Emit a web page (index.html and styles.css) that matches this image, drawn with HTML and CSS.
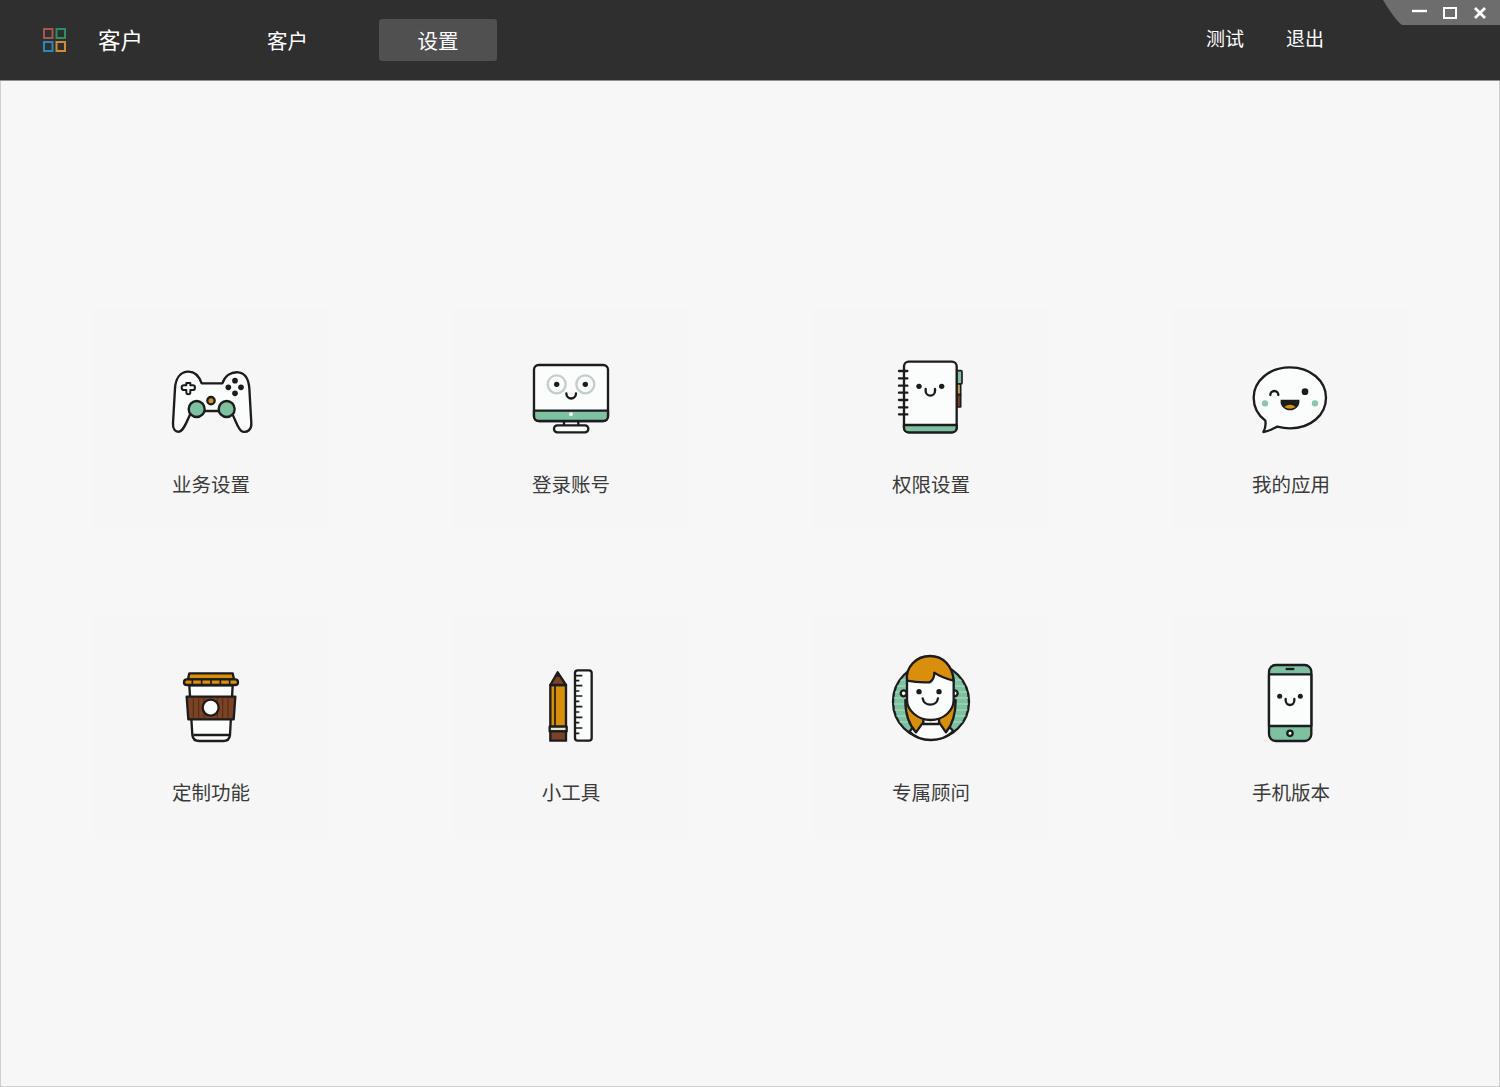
FILE: index.html
```html
<!DOCTYPE html>
<html lang="zh-CN">
<head>
<meta charset="utf-8">
<title>客户</title>
<link rel="stylesheet" href="styles.css">
</head>
<body>
<div class="window">
  <header class="topbar">
    <div class="brand">
      <svg class="logo" viewBox="0 0 23 24" width="23" height="24">
        <rect x="1" y="1" width="8.5" height="9" fill="none" stroke="#a9544f" stroke-width="2"/>
        <rect x="13.5" y="1" width="8.5" height="9" fill="none" stroke="#2b8f60" stroke-width="2"/>
        <rect x="1" y="14" width="8.5" height="9" fill="none" stroke="#2a88b8" stroke-width="2"/>
        <rect x="13.5" y="14" width="8.5" height="9" fill="none" stroke="#cf8c36" stroke-width="2"/>
      </svg>
      <span class="brand-name">客户</span>
    </div>
    <nav class="nav">
      <a class="nav-item">客户</a>
      <a class="nav-item nav-active">设置</a>
    </nav>
    <div class="actions">
      <a class="action">测试</a>
      <a class="action">退出</a>
    </div>
    <div class="winctl">
      <svg width="117" height="25" viewBox="0 0 117 25">
        <path d="M0 0 L117 0 L117 25 L19 25 Q12 20 0 0Z" fill="#6d6d6d"/>
        <path d="M29 11 H44" stroke="#fff" stroke-width="2.4"/>
        <rect x="61" y="8" width="12" height="10" fill="none" stroke="#fff" stroke-width="2"/>
        <path d="M92 8 L102 18 M102 8 L92 18" stroke="#fff" stroke-width="2.8"/>
      </svg>
    </div>
  </header>

  <main class="grid">
    <div class="card">
      <svg class="icon" viewBox="0 -30 306 300">
        <g stroke="#1c1c1c" stroke-width="7" stroke-linejoin="round" stroke-linecap="round">
          <path fill="#fbfcfc" d="M125 85 L187 85 C195 62 213 50 235 52 C256 54 266 75 268 100 L274 205 C275 224 262 233 248 230 C234 227 228 195 212 168 L95 168 C82 195 72 227 58 230 C46 232 38 222 39 205 L45 100 C47 72 60 52 82 50 C105 48 118 65 125 85Z"/>
          <path fill="#fbfcfc" stroke-width="6" d="M79 84 h12 v7 h7 a7 7 0 0 1 0 14 h-7 v7 a6 6 0 0 1 -12 0 v-7 h-7 a7 7 0 0 1 0 -14 h7 v-7z"/>
          <circle cx="110" cy="162" r="24" fill="#7dc1a1"/>
          <circle cx="200" cy="162" r="24" fill="#7dc1a1"/>
          <circle cx="153" cy="137" r="11" fill="#d4912a"/>
        </g>
        <g fill="#1c1c1c">
          <circle cx="225" cy="77" r="8.5"/><circle cx="205" cy="97" r="8.5"/><circle cx="243" cy="97" r="8.5"/><circle cx="225" cy="115" r="8.5"/>
        </g>
      </svg>
      <span class="label">业务设置</span>
    </div>

    <div class="card">
      <svg class="icon" viewBox="0 -30 306 300">
        <g stroke="#1c1c1c" stroke-width="7" stroke-linejoin="round">
          <path d="M132 198 V212 M175 198 V212" fill="none"/>
          <rect x="102" y="211" width="103" height="21" rx="10" fill="#fbfcfc"/>
          <rect x="42" y="30" width="222" height="168" rx="14" fill="#fbfcfc"/>
          <path d="M42 167 H264 V184 a14 14 0 0 1 -14 14 H56 a14 14 0 0 1 -14 -14Z" fill="#7dc1a1"/>
        </g>
        <circle cx="153" cy="178" r="6" fill="#fbfcfc"/>
        <circle cx="110" cy="88" r="27" fill="#fbfcfc" stroke="#c3cfca" stroke-width="7"/>
        <circle cx="196" cy="88" r="27" fill="#fbfcfc" stroke="#c3cfca" stroke-width="7"/>
        <circle cx="110" cy="88" r="8" fill="#1c1c1c"/>
        <circle cx="196" cy="88" r="8" fill="#1c1c1c"/>
        <path d="M139 115 a14 15 0 0 0 29 0" fill="none" stroke="#1c1c1c" stroke-width="7" stroke-linecap="round"/>
      </svg>
      <span class="label">登录账号</span>
    </div>

    <div class="card">
      <svg class="icon" viewBox="0 -30 306 300">
        <g stroke="#1c1c1c" stroke-width="5" stroke-linejoin="round">
          <rect x="230" y="47" width="16" height="40" rx="3" fill="#7dc1a1"/>
          <rect x="230" y="87" width="12" height="32" fill="#c9a565"/>
          <rect x="230" y="119" width="12" height="37" fill="#7a4325"/>
        </g>
        <g stroke="#1c1c1c" stroke-width="7" stroke-linejoin="round">
          <rect x="72" y="20" width="158" height="212" rx="14" fill="#fbfcfc"/>
          <path d="M72 210 H230 V218 a14 14 0 0 1 -14 14 H86 a14 14 0 0 1 -14 -14Z" fill="#7dc1a1"/>
        </g>
        <path d="M57 48 H82 M57 70 H82 M57 92 H82 M57 113 H82 M57 135 H82 M57 157 H82 M57 178 H82" stroke="#1c1c1c" stroke-width="7" stroke-linecap="round"/>
        <circle cx="117" cy="94" r="8" fill="#1c1c1c"/>
        <circle cx="185" cy="94" r="8" fill="#1c1c1c"/>
        <path d="M137 102 V108 a14 14 0 0 0 28 0 V102" fill="none" stroke="#1c1c1c" stroke-width="7" stroke-linecap="round"/>
      </svg>
      <span class="label">权限设置</span>
    </div>

    <div class="card">
      <svg class="icon" viewBox="0 -30 306 300">
        <path d="M150 37 C212 37 258 78 258 128 C258 180 212 220 150 220 C137 220 124 218 112 215 C98 222 84 230 70 231 C76 221 78 210 76 197 C54 180 41 156 41 128 C41 78 88 37 150 37Z" fill="#fbfcfc" stroke="#1c1c1c" stroke-width="7" stroke-linejoin="round"/>
        <path d="M91 120 a12 12 0 0 1 24 0" fill="none" stroke="#1c1c1c" stroke-width="7" stroke-linecap="round"/>
        <circle cx="195" cy="110" r="10" fill="#1c1c1c"/>
        <circle cx="75" cy="145" r="9.5" fill="#8cc7ab"/>
        <circle cx="225" cy="145" r="9.5" fill="#8cc7ab"/>
        <path d="M122 134 H178 C181 152 167 166 150 166 C133 166 119 152 122 134Z" fill="#1c1c1c"/>
        <path d="M133 156 Q150 142 167 156 Q150 166 133 156Z" fill="#d98e0c"/>
      </svg>
      <span class="label">我的应用</span>
    </div>

    <div class="card">
      <svg class="icon" viewBox="0 -21 306 300">
        <g stroke="#1c1c1c" stroke-width="7" stroke-linejoin="round">
          <path d="M88 76 L97 225 Q99 243 118 243 L190 243 Q208 243 210 225 L218 76Z" fill="#fbfcfc"/>
          <path d="M100 225 H207" fill="none"/>
          <path d="M88 40 H218 L222 58 H84Z" fill="#d98e0c"/>
          <rect x="72" y="58" width="162" height="17" rx="8.5" fill="#d98e0c"/>
          <path d="M97 59 V74 M125 59 V74 M153 59 V74 M181 59 V74 M209 59 V74" stroke-width="5" fill="none"/>
          <path d="M80 110 H226 L221 178 H85Z" fill="#7a4325"/>
        </g>
        <path d="M100 112 V176 M116 112 V176 M132 112 V176 M172 112 V176 M188 112 V176 M204 112 V176" stroke="#54290f" stroke-width="3"/>
        <circle cx="152" cy="143" r="24" fill="#fbfcfc" stroke="#1c1c1c" stroke-width="7"/>
      </svg>
      <span class="label">定制功能</span>
    </div>

    <div class="card">
      <svg class="icon" viewBox="0 -21 306 300">
        <g stroke="#1c1c1c" stroke-width="7" stroke-linejoin="round">
          <rect x="165" y="31" width="50" height="211" rx="8" fill="#fbfcfc"/>
          <path d="M165 47 H187 M165 62 H178 M165 77 H187 M165 93 H178 M165 108 H187 M165 124 H178 M165 140 H187 M165 156 H178 M165 172 H187 M165 188 H178 M165 204 H187 M165 220 H178" stroke-width="5" fill="none"/>
          <path d="M91 75 H138 V200 H91Z" fill="#d98e0c"/>
          <path d="M91 75 L113 37 L138 75Z" fill="#7a4325"/>
          <path d="M105 75 V197" stroke-width="5" fill="none"/>
          <rect x="89" y="200" width="51" height="14" fill="#e9e2d6"/>
          <rect x="91" y="214" width="47" height="28" fill="#7a4325"/>
        </g>
        <path d="M105 50 L113 37 L121 50Z" fill="#1c1c1c"/>
      </svg>
      <span class="label">小工具</span>
    </div>

    <div class="card">
      <svg class="icon" viewBox="0 9 306 300">
        <defs>
          <clipPath id="round"><circle cx="153" cy="155" r="112"/></clipPath>
        </defs>
        <circle cx="153" cy="155" r="114" fill="#7dc1a1" stroke="#1c1c1c" stroke-width="7"/>
        <g clip-path="url(#round)" stroke="#9fd2b8" stroke-width="4">
          <path d="M30 90 H280 M30 108 H280 M30 126 H280 M30 144 H280 M30 162 H280 M30 180 H280 M30 198 H280 M30 216 H280"/>
        </g>
        <g stroke="#1c1c1c" stroke-width="7" stroke-linejoin="round">
          <path d="M122 205 L88 245 C105 262 130 270 153 270 C178 270 203 260 220 243 L183 205Z" fill="#fbfcfc"/>
          <path d="M76 150 C76 200 90 228 108 247 L136 208 L100 170Z" fill="#d98e0c"/>
          <path d="M227 150 C227 200 214 228 198 247 L171 208 L205 170Z" fill="#d98e0c"/>
          <path d="M130 205 V222 H177 V205" fill="#fbfcfc"/>
          <circle cx="71" cy="130" r="9" fill="#fbfcfc"/>
          <circle cx="224" cy="130" r="9" fill="#fbfcfc"/>
          <path d="M81 92 V150 C81 180 112 210 152 210 C193 210 221 180 221 150 V92 C218 60 190 40 150 40 C110 40 84 60 81 92Z" fill="#fbfcfc"/>
          <path d="M81 92 C76 50 110 18 150 18 C190 18 218 48 221 92 C205 88 180 80 163 68 C163 80 158 92 148 97 C125 98 100 96 81 92Z" fill="#d98e0c"/>
        </g>
        <circle cx="117" cy="125" r="8" fill="#1c1c1c"/>
        <circle cx="177" cy="125" r="8" fill="#1c1c1c"/>
        <path d="M128 145 C132 170 170 170 174 145" fill="none" stroke="#1c1c1c" stroke-width="7" stroke-linecap="round"/>
      </svg>
      <span class="label">专属顾问</span>
    </div>

    <div class="card">
      <svg class="icon" viewBox="0 -6 306 300">
        <g stroke="#1c1c1c" stroke-width="7" stroke-linejoin="round">
          <rect x="87" y="30" width="127" height="228" rx="20" fill="#7dc1a1"/>
          <rect x="87" y="58" width="127" height="155" fill="#fbfcfc"/>
          <path d="M137 42 H163" fill="none"/>
          <circle cx="150" cy="235" r="8" fill="#fbfcfc"/>
        </g>
        <circle cx="119" cy="124" r="7.5" fill="#1c1c1c"/>
        <circle cx="181" cy="124" r="7.5" fill="#1c1c1c"/>
        <path d="M137 132 V136 a13 14 0 0 0 26 0 V132" fill="none" stroke="#1c1c1c" stroke-width="7" stroke-linecap="round"/>
      </svg>
      <span class="label">手机版本</span>
    </div>
  </main>
</div>
</body>
</html>
```

FILE: styles.css
```css
* { box-sizing: border-box; }
html, body { margin: 0; padding: 0; }
body {
  width: 1500px;
  height: 1087px;
  overflow: hidden;
  font-family: "Noto Sans CJK SC", "Liberation Sans", sans-serif;
  background: #f7f7f7;
}
.window {
  position: relative;
  width: 1500px;
  height: 1087px;
  display: flex;
  flex-direction: column;
  border: 1px solid #cfcfcf;
  border-top: 0;
}
.topbar {
  height: 81px;
  margin: 0 -1px;
  flex: none;
  display: flex;
  align-items: center;
  background: #2f2f2f;
  border-bottom: 1px solid #8f8f8f;
  padding-left: 43px;
  color: #fff;
  font-weight: 400;
}
.brand {
  display: flex;
  align-items: center;
  width: 224px;
}
.logo { flex: none; margin-top: -1px; margin-right: 32px; }
.brand-name { font-size: 22.5px; line-height: 28px; margin-top: -2px; }
.nav {
  display: flex;
  align-items: center;
}
.nav-item {
  font-size: 20.5px;
  line-height: 30px;
  width: 40px;
  white-space: nowrap;
}
.nav-active {
  width: 118px;
  height: 42px;
  margin-left: 72px;
  line-height: 42px;
  text-align: center;
  background: #505050;
  border-radius: 3px;
}
.actions {
  display: flex;
  gap: 42px;
  margin-left: 709px;
  margin-top: -5px;
}
.action {
  font-size: 19px;
  line-height: 28px;
  white-space: nowrap;
}
.winctl {
  position: absolute;
  top: 0;
  right: -1px;
  line-height: 0;
}
.grid {
  display: grid;
  grid-template-columns: repeat(4, 236px);
  grid-auto-rows: 222px;
  column-gap: 124px;
  row-gap: 86px;
  padding: 227px 0 0 92px;
}
.card {
  display: flex;
  flex-direction: column;
  align-items: center;
  padding-top: 37px;
  background: #f6f6f6;
  border-radius: 4px;
}
.icon {
  flex: none;
  width: 102px;
  height: 100px;
  overflow: visible;
}
.label {
  margin-top: 23px;
  font-size: 19.5px;
  line-height: 32px;
  color: #3a3a3a;
  font-weight: 400;
  white-space: nowrap;
}
```
